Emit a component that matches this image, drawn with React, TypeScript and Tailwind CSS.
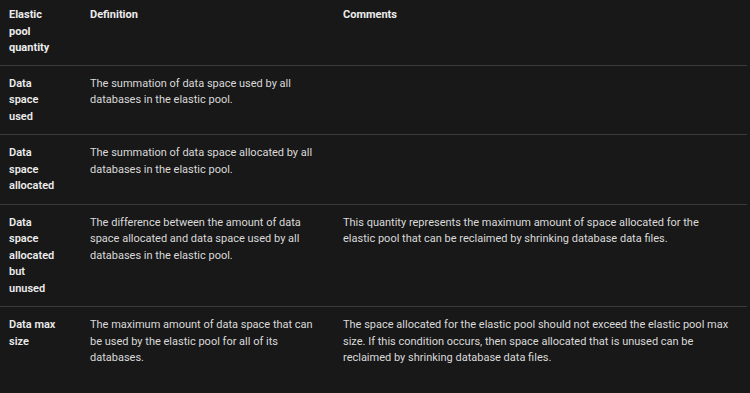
const rows = [
  {
    name: "Data space used",
    definition: "The summation of data space used by all databases in the elastic pool.",
    comments: "",
  },
  {
    name: "Data space allocated",
    definition: "The summation of data space allocated by all databases in the elastic pool.",
    comments: "",
  },
  {
    name: "Data space allocated but unused",
    definition:
      "The difference between the amount of data space allocated and data space used by all databases in the elastic pool.",
    comments:
      "This quantity represents the maximum amount of space allocated for the elastic pool that can be reclaimed by shrinking database data files.",
  },
  {
    name: "Data max size",
    definition:
      "The maximum amount of data space that can be used by the elastic pool for all of its databases.",
    comments:
      "The space allocated for the elastic pool should not exceed the elastic pool max size. If this condition occurs, then space allocated that is unused can be reclaimed by shrinking database data files.",
  },
];

export default function App() {
  return (
    <div
      className="w-[750px] h-[393px] bg-[#181818] text-[#e4e4e4] text-[11px] leading-[16.5px] overflow-hidden"
      style={{ fontFamily: "Roboto, 'Liberation Sans', sans-serif" }}
    >
      <table className="w-[747px] border-collapse table-fixed">
        <colgroup>
          <col className="w-[81px]" />
          <col className="w-[253px]" />
          <col className="w-[413px]" />
        </colgroup>
        <thead>
          <tr className="border-b border-[#3a3a3a] font-semibold text-left align-top text-[#ececec]">
            <th className="pl-[9px] pr-[22px] pt-[7px] pb-[8px]">Elastic pool quantity</th>
            <th className="pl-[9px] pr-[9px] pt-[7px] pb-[8px]">Definition</th>
            <th className="pl-[9px] pr-[18px] pt-[7px] pb-[8px]">Comments</th>
          </tr>
        </thead>
        <tbody>
          {rows.map((row, i) => (
            <tr
              key={row.name}
              className={`align-top ${i < rows.length - 1 ? "border-b border-[#3a3a3a]" : ""}`}
            >
              <td className="pl-[9px] pr-[22px] pt-[10px] pb-[9px] font-semibold text-[#ececec]">{row.name}</td>
              <td className="pl-[9px] pr-[9px] pt-[10px] pb-[9px] text-[#dadada]">{row.definition}</td>
              <td className="pl-[9px] pr-[18px] pt-[10px] pb-[9px] text-[#dadada]">{row.comments}</td>
            </tr>
          ))}
        </tbody>
      </table>
    </div>
  );
}
